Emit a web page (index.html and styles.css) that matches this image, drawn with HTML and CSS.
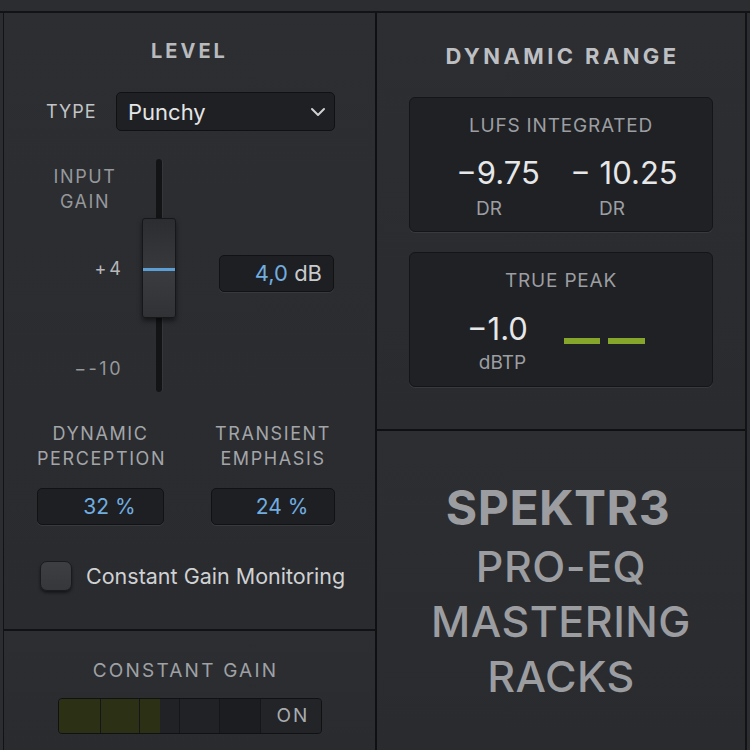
FILE: index.html
```html
<!DOCTYPE html>
<html lang="en">
  <head>
    <meta charset="UTF-8" />
    <meta name="viewport" content="width=device-width, initial-scale=1.0" />
    <title>SPEKTR3 Pro-EQ</title>
    <link rel="stylesheet" href="styles.css">
  </head>
  <body>
    <div class="topbar"></div>

    <main class="rack">
      <!-- 左カラム -->
      <div class="col col-left">
        <section class="panel level">
          <h2 class="panel-title">LEVEL</h2>

          <div class="type-row">
            <span class="label">TYPE</span>
            <div class="select">
              <span>Punchy</span>
              <svg class="chevron" width="16" height="10" viewBox="0 0 16 10">
                <polyline points="2,2 8,8 14,2" fill="none" stroke="#cfd0d2" stroke-width="2" stroke-linecap="round" stroke-linejoin="round" />
              </svg>
            </div>
          </div>

          <div class="gain-row">
            <div class="gain-labels">
              <div class="label gain-title">INPUT<br>GAIN</div>
              <div class="scale scale-top">+4</div>
              <div class="scale scale-bottom">&minus;-10</div>
            </div>
            <div class="fader">
              <div class="fader-track"></div>
              <div class="fader-knob"><span class="fader-line"></span></div>
            </div>
            <div class="value-box gain-value"><span class="num">4,0</span> dB</div>
          </div>

          <div class="params">
            <div class="param">
              <div class="label">DYNAMIC<br>PERCEPTION</div>
              <div class="value-box"><span class="num">32 %</span></div>
            </div>
            <div class="param">
              <div class="label">TRANSIENT<br>EMPHASIS</div>
              <div class="value-box"><span class="num">24 %</span></div>
            </div>
          </div>

          <label class="check-row">
            <span class="checkbox"></span>
            <span>Constant Gain Monitoring</span>
          </label>
        </section>

        <section class="panel constant">
          <div class="label constant-title">CONSTANT GAIN</div>
          <div class="meter">
            <span class="seg lit s1"></span>
            <span class="seg lit s2"></span>
            <span class="seg lit s3"></span>
            <span class="seg s4"></span>
            <span class="seg s5"></span>
            <span class="seg dim s6"></span>
            <span class="meter-on">ON</span>
          </div>
        </section>
      </div>

      <!-- 右カラム -->
      <div class="col col-right">
        <section class="panel range">
          <h2 class="panel-title wide">DYNAMIC RANGE</h2>

          <div class="readout">
            <div class="label readout-title">LUFS INTEGRATED</div>
            <div class="readout-values">
              <div class="readout-col">
                <div class="big">&minus;9.75</div>
                <div class="unit">DR</div>
              </div>
              <div class="readout-col">
                <div class="big">&minus; 10.25</div>
                <div class="unit">DR</div>
              </div>
            </div>
          </div>

          <div class="readout">
            <div class="label readout-title">TRUE PEAK</div>
            <div class="peak-row">
              <div class="peak-col">
                <div class="big">&minus;1.0</div>
                <div class="unit">dBTP</div>
              </div>
              <div class="peak-bars">
                <span></span>
                <span></span>
              </div>
            </div>
          </div>
        </section>

        <section class="panel brand">
          <div class="brand-name">SPEKTR3</div>
          <div class="brand-line">PRO-EQ</div>
          <div class="brand-line">MASTERING</div>
          <div class="brand-line">RACKS</div>
        </section>
      </div>
    </main>
  </body>
</html>
```

FILE: styles.css
```css
body {
  margin: 0;
  width: 750px;
  height: 750px;
  overflow: hidden;
  background: #2b2d31;
  font-family: Inter, "Noto Sans", sans-serif;
  color: #a7a9ad;
}

.topbar {
  height: 11px;
  background: #2b2d31;
  border-bottom: 2px solid #121315;
}

.rack {
  display: grid;
  grid-template-columns: 373px 368px;
  margin-left: 3px;
  width: 744px;
  height: 737px;
  border-left: 1px solid #121315;
  border-right: 2px solid #121315;
  box-sizing: border-box;
}

.col {
  display: flex;
  flex-direction: column;
}

.col-left {
  border-right: 2px solid #0f1012;
}

.panel {
  background: linear-gradient(#2c2e32, #292b2f);
}

.label {
  font-size: 18px;
  letter-spacing: 1.6px;
  color: #a3a5a9;
  line-height: 25px;
}

.panel-title {
  margin: 0;
  text-align: center;
  font-size: 20px;
  font-weight: 700;
  letter-spacing: 3px;
  color: #b8babe;
  line-height: 24px;
}

.value-box {
  background: #1d1f22;
  border: 1px solid #111214;
  border-radius: 5px;
  box-shadow: 0 1px 0 #37393d;
  box-sizing: border-box;
  height: 37px;
  font-size: 21px;
  line-height: 35px;
  color: #c9cacd;
  text-align: center;
}

.num {
  color: #72ade0;
}

/* LEVEL */
.level {
  height: 616px;
  border-bottom: 2px solid #111214;
  display: flex;
  flex-direction: column;
}

.level .panel-title {
  margin-top: 26px;
}

.type-row {
  display: flex;
  align-items: center;
  margin-top: 29px;
  padding-left: 42px;
}

.type-row .label {
  width: 70px;
  font-size: 18px;
  letter-spacing: 1px;
  color: #c3c4c7;
}

.select {
  width: 219px;
  height: 39px;
  box-sizing: border-box;
  display: flex;
  align-items: center;
  justify-content: space-between;
  padding: 0 8px 0 11px;
  background: #1e2023;
  border: 1px solid #101113;
  border-radius: 5px;
  font-size: 22px;
  color: #e4e5e7;
}

.gain-row {
  display: flex;
  margin-top: 28px;
  height: 233px;
}

.gain-labels {
  width: 80px;
  margin-left: 41px;
  display: flex;
  flex-direction: column;
}

.gain-title {
  text-align: center;
  margin-top: 5px;
  color: #96989c;
}

.scale {
  text-align: right;
  font-size: 18px;
  line-height: 24px;
  color: #b6b8bb;
  letter-spacing: 1px;
}

.scale-top {
  margin-top: 43px;
  padding-right: 1px;
  letter-spacing: 3px;
}

.scale-bottom {
  margin-top: 76px;
  padding-right: 2px;
  letter-spacing: 2.5px;
  color: #96989c;
}

.fader {
  position: relative;
  width: 34px;
  margin-left: 17px;
}

.fader-track {
  width: 6px;
  height: 233px;
  margin: 0 auto;
  background: #131416;
  border-radius: 3px;
  box-shadow: 1px 0 0 #34363a;
}

.fader-knob {
  position: absolute;
  left: 0;
  top: 59px;
  width: 34px;
  height: 100px;
  box-sizing: border-box;
  background: linear-gradient(#2b2d31, #36383c 48%, #3a3c40 52%, #303236);
  border: 1px solid #161719;
  border-radius: 3px;
  box-shadow: 0 3px 5px rgba(0, 0, 0, 0.5);
}

.fader-line {
  position: absolute;
  left: 0;
  right: 0;
  top: 49px;
  height: 3px;
  background: #5b9fd6;
}

.gain-value {
  width: 115px;
  margin: 96px 0 0 43px;
  text-align: right;
  padding-right: 11px;
  font-size: 22px;
}

.params {
  display: grid;
  grid-template-columns: 127px 124px;
  column-gap: 47px;
  margin: 29px 0 0 33px;
}

.param {
  display: flex;
  flex-direction: column;
}

.param .label {
  text-align: center;
  height: 50px;
}

.param .value-box {
  margin-top: 17px;
  height: 37px;
  padding-left: 18px;
}

.check-row {
  display: flex;
  align-items: center;
  margin: 36px 0 0 36px;
  font-size: 21.5px;
  color: #d0d1d3;
}

.checkbox {
  width: 30px;
  height: 28px;
  margin-right: 14px;
  border-radius: 7px;
  background: linear-gradient(#3d3f43, #35373b);
  border: 1px solid #1a1b1d;
  box-shadow: 0 2px 3px rgba(0, 0, 0, 0.5);
}

/* CONSTANT GAIN */
.constant {
  flex: 1;
  display: flex;
  flex-direction: column;
  align-items: center;
}

.constant-title {
  margin-top: 29px;
  padding-right: 8px;
  font-size: 19px;
  line-height: 22px;
  letter-spacing: 2.2px;
  color: #9fa1a5;
}

.meter {
  display: flex;
  width: 264px;
  height: 36px;
  margin-top: 16px;
  margin-left: 1px;
  box-sizing: border-box;
  border: 1px solid #101113;
  border-radius: 4px;
  overflow: hidden;
  background: #1f2124;
}

.seg {
  border-right: 1px solid #15161a;
  background: #202226;
}

.seg.lit {
  background: #2c3116;
}

.s1 { width: 41px; }
.s2 { width: 38px; }
.s3 { width: 20px; border-right: none; }
.s4 { width: 19px; }
.s5 { width: 39px; }
.s6 { width: 40px; }

.seg.dim {
  background: #1b1d20;
}

.meter-on {
  flex: 1;
  text-align: center;
  line-height: 34px;
  font-size: 19px;
  letter-spacing: 2px;
  padding-left: 4px;
  color: #a9abaf;
  background: #222428;
}

/* DYNAMIC RANGE */
.range {
  height: 416px;
  border-bottom: 2px solid #0f1012;
  display: flex;
  flex-direction: column;
  align-items: center;
}

.panel-title.wide {
  margin-top: 30px;
  font-size: 22px;
  line-height: 26px;
  letter-spacing: 3.4px;
  color: #bdbfc2;
  padding-left: 3px;
}

.readout {
  width: 304px;
  height: 135px;
  box-sizing: border-box;
  margin-top: 28px;
  background: #1f2124;
  border: 1px solid #141517;
  border-radius: 6px;
  box-shadow: 0 1px 0 #383a3e;
  display: flex;
  flex-direction: column;
  align-items: center;
}

.readout + .readout {
  margin-top: 20px;
}

.readout-title {
  margin-top: 17px;
  line-height: 22px;
  font-size: 19px;
  letter-spacing: 0.8px;
  color: #9c9ea2;
}

.readout-values {
  display: flex;
  gap: 14px;
  margin-top: 19px;
}

.readout-col {
  width: 112px;
  text-align: center;
}

.big {
  font-size: 31px;
  line-height: 34px;
  color: #e6e7e9;
}

.unit {
  font-size: 19px;
  line-height: 22px;
  margin-top: 8px;
  color: #9c9ea2;
}

.readout-col:first-child .unit {
  padding-right: 18px;
}

.readout-col:last-child .unit {
  padding-right: 24px;
}

.peak-row {
  display: flex;
  align-items: flex-start;
  margin-top: 20px;
  margin-right: 25px;
}

.peak-col {
  width: 90px;
  text-align: center;
}

.peak-col .unit {
  margin-top: 6px;
  padding-left: 10px;
}

.peak-bars {
  display: flex;
  gap: 8px;
  margin: 26px 0 0 21px;
}

.peak-bars span {
  width: 36px;
  height: 6px;
  background: #86a62b;
}

.peak-bars span + span {
  width: 37px;
}

/* ブランド */
.brand {
  flex: 1;
  display: flex;
  flex-direction: column;
  align-items: center;
  padding-top: 49px;
  color: #9c9da0;
}

.brand-name {
  font-size: 48px;
  font-weight: 700;
  line-height: 56px;
  letter-spacing: 0.5px;
  padding-right: 6px;
}

.brand-line {
  font-size: 43px;
  font-weight: 500;
  line-height: 56px;
  letter-spacing: 0.5px;
}

.brand-name + .brand-line {
  margin-top: 2px;
}

.brand-line + .brand-line {
  margin-top: -1px;
}
```
